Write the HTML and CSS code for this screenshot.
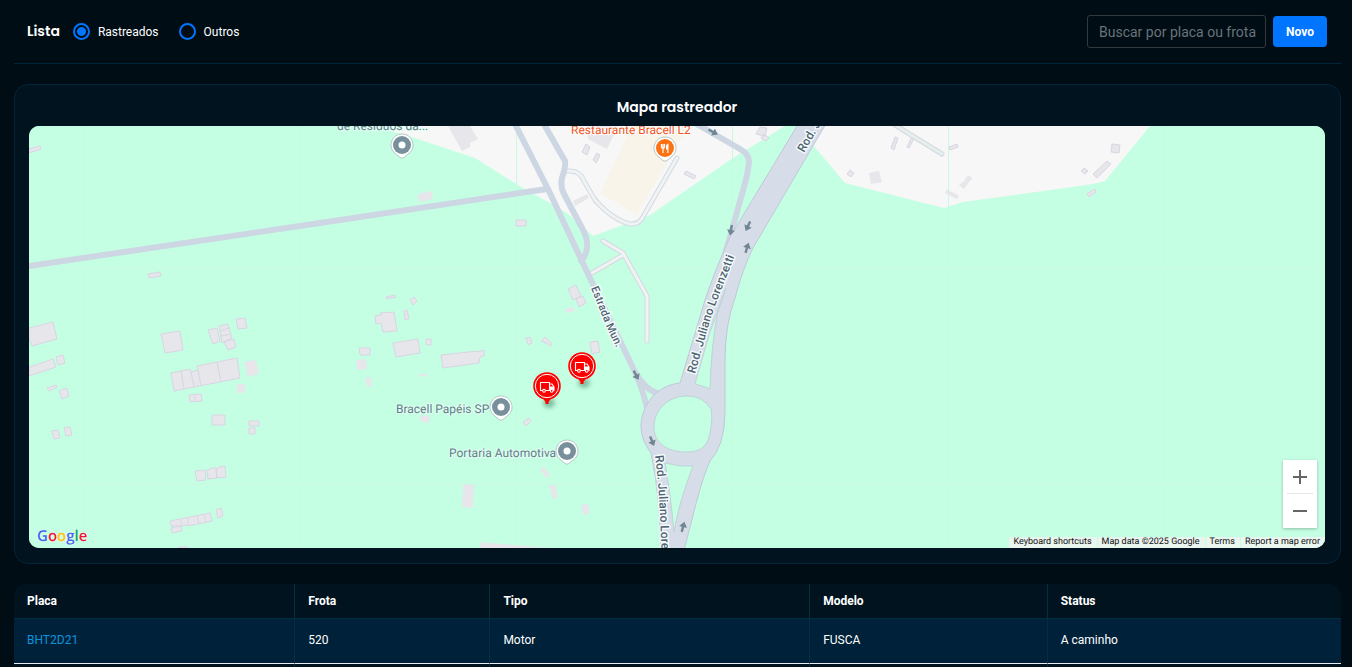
FILE: index.html
```html
<!DOCTYPE html>
<html lang="pt-BR">
<head>
<meta charset="utf-8">
<title>Lista de veículos</title>
<link rel="stylesheet" href="styles.css">
</head>
<body>
<header class="toolbar">
  <h1 class="toolbar-title">Lista</h1>
  <label class="choice"><input type="radio" name="lista" checked><span>Rastreados</span></label>
  <label class="choice"><input type="radio" name="lista"><span>Outros</span></label>
  <input class="search" type="text" aria-label="Buscar" placeholder="Buscar por placa ou frota">
  <button class="new-button" type="button">Novo</button>
</header>
<main>
<section class="card">
  <h2 class="card-title">Mapa rastreador</h2>
  <div class="map">
    <svg class="map-canvas" viewBox="29 126 1296 422" preserveAspectRatio="xMidYMid slice" role="img" aria-label="Mapa">
      <defs>
        <g id="pin">
          <path class="pin-edge" d="M0-11A11 11 0 0 1 8 7.500L2 12.500Q0 14-2 12.500L-8 7.500A11 11 0 0 1 0-11Z"/>
          <circle r="9"/>
        </g>
        <path id="arrow" class="arrow" d="M-1.200-5H1.200V0H4L0 5.500-4 0H-1.200Z"/>
        <g id="truck">
          <ellipse class="truck-shadow" cx="2" cy="17" rx="6" ry="5"/>
          <path fill="#f00" d="M-5 11H5L1.500 16V18H-1.500V16Z"/>
          <circle r="13.800" fill="#f00"/>
          <circle r="11.700" fill="none" stroke="#fff" stroke-width="1"/>
          <path class="truck-line" d="M-4.500 4.500H-6.500V-3.500H2.500V4.500H-1M2.500-2H5L7 1V4.500H6.500"/>
          <path fill="#fff" d="M2.500 .500H7V4.500H2.500Z"/>
          <circle class="truck-line" cx="-3" cy="4.800" r="1.400"/>
          <circle class="truck-line" cx="4.700" cy="4.800" r="1.400"/>
        </g>
        <path id="way-north" d="M695 374L704 342Q710 319 718 298L739 245"/>
        <path id="way-top" d="M804 153L835 99"/>
        <path id="way-mun" d="M591 288L607 328L625 366"/>
        <path id="way-south" d="M655 456Q660 490 662 570"/>
      </defs>
      <rect x="29" y="-400" width="1296" height="1500" fill="#c5ffe3"/>
      <path fill="#f7f7f7" d="M372 126V-200H797V126L813 145 845 183 944 208 963 202 1093 184 1105 181 1150 126V-200H785V126L727 162 650 215 593 236 567 213 550 203 523 188 475 158 412 137Z"/>
      <path fill="#c5ffe3" d="M785 126H798L813 145 780 200H733L727 162Z"/>
      <path fill="#f8f4e9" d="M632 126H690L678 144 637 215 600 193Z"/>
      <path class="tile" d="M84.500 126V548M300.500 126V548M516.500 126V548M732.500 126V548M948.500 126V548M1164.500 126V548M29 268.500H1325M29 484.500H1325"/>

      <g class="building soft">
        <path d="M448 126H470L478 139 470 143 470 147 462 151Z"/>
        <path d="M588 126H618L607 149 588 139Z"/>
        <path d="M573 201L587 194 589 198 575 206ZM592 198L596 196 599 201 594 204Z"/>
        <path d="M418 194L432 191 433 199 419 202Z"/>
        <path d="M869 173L879 171 882 182 871 184ZM947 189L959 196 957 199 945 193ZM968 175L972 178 964 189 959 185 964 181Z"/>
        <path d="M244 362L256 360 259 374 248 377ZM237 384H245V393H237Z"/>
        <path d="M356 360L366 359 367 369 357 370ZM365 378L371 377 372 386 367 387ZM419 375L426 373 426 376 420 377Z"/>
        <path d="M420 415L430 416 429 423 420 421ZM463 484L474 485 473 508 462 507ZM540 469L544 467 550 475 546 478ZM549 486L555 484 558 497 553 499ZM581 505L588 504 590 513 583 515ZM481 542L536 547 570 549H480Z"/>
        <path d="M565 309L574 307 575 311 566 313Z"/>
      </g>
      <g class="building">
        <path d="M586 144L590 147 587 155 582 152ZM597 153L600 155 596 163 593 160Z"/>
        <path d="M686 171L696 176 694 179 684 174ZM760 127L767 128 765 136 756 134ZM764 134L769 138 766 141 761 138Z"/>
        <path d="M516 220H526V226H516Z"/>
        <path d="M895 137L898 138 894 150 891 148ZM912 136L914 138 909 148 907 147ZM949 147L957 144 958 147 950 150Z"/>
        <path d="M850 170L854 173 851 177 847 174Z"/>
        <path d="M1112 144L1120 145 1119 153 1111 152ZM1107 161L1111 164 1097 178 1093 174ZM1084 168L1088 171 1085 174 1081 171ZM1087 194L1095 189 1096 192 1089 197Z"/>
        <path d="M148 274L160 272 161 276 149 278Z"/>
        <path d="M29 328L53 322 57 339 32 346 29 338ZM29 367L53 359 56 367 29 376ZM56 357L63 355 65 363 58 365ZM47 388L56 385 57 387 49 391ZM59 391L67 388 69 396 62 399Z"/>
        <path d="M29 149L40 146 41 149 29 153Z"/>
        <path d="M161 334L180 331 183 350 165 353ZM208 330L217 328 220 341 213 344ZM219 326L228 324 232 338 222 343ZM220 331L229 328M221 336L231 334M224 342L234 339 236 347 228 350ZM236 319L245 318 247 328 238 329Z"/>
        <path d="M171 373L190 369 191 372 198 370 197 366 237 358 240 378 174 391ZM181 371L184 389M191 372L194 387M198 370L201 386M217 362L221 382"/>
        <path d="M189 395L201 394 202 401 190 402ZM195 395V402"/>
        <path d="M52 431L58 430 60 438 54 439ZM64 428L70 427 72 435 66 436ZM212 415H225V425H212ZM249 421H259V426H249ZM249 428H255V434H249Z"/>
        <path d="M195 471L205 470 206 480 197 481ZM207 470L211 469 211 468 216 468 217 478 208 479ZM216 469L220 467 225 466 226 477 217 478Z"/>
        <path d="M170 521L180 519 190 517 210 513 212 521 193 525 181 526 171 526ZM180 519L182 525M188 518V525M197 516L199 524M204 514L206 523M216 510L221 508 223 516 218 518ZM171 528L181 526 182 531 172 533ZM178 547H188V551H178Z"/>
        <path d="M386 297L395 295 396 297 387 299ZM410 300L414 297 417 301 413 305ZM404 311L407 310 409 319 405 320ZM375 316L381 315 380 313 394 312 397 331 383 332 381 323 376 324Z"/>
        <path d="M393 343L418 339 420 353 396 357ZM426 339H431V345H426ZM441 355L478 351 478 352 484 350 484 356 480 357 479 363 443 368ZM359 348H370V355H360Z"/>
        <path d="M568 289L576 285 581 296 573 300ZM576 299L583 296 586 303 579 307ZM526 338L530 337 532 343 528 345ZM541 341L545 337 552 344 550 346 546 343ZM590 342L598 341 600 352 592 354Z"/>
        <path d="M523 422L529 418 531 421 526 426Z"/>
      </g>

      <g class="lane-edge"><path d="M568 171Q580 170 584 181L595 200Q613 220 630 224 640 225 644 215L677 158M895 125L942 154M603 241L623 253 647 296V341M623 255L592 273"/></g>
      <g class="lane"><path d="M568 171Q580 170 584 181L595 200Q613 220 630 224 640 225 644 215L677 158M603 241L623 253 647 296V341M623 255L592 273"/><path stroke="#e7eeee" d="M895 125L942 154"/></g>
      <g class="street">
        <path d="M29 266L320 223 547 189"/>
        <path d="M501 98L516 126 548 189 589 276 622 345 635 372Q645 390 659 394M635 372Q642 387 647 408"/>
        <path d="M533 105L545 126 565 161Q566 166 562 178 560 187 564 194L582 228Q588 238 587 248 586 256 581 261"/>
        <path d="M665 106L700 126 740 149Q749 154 749 162 748 174 744 187L730 237 721 268"/>
      </g>
      <path class="highway" d="M847 88L753 248Q743 268 735 298 725 325 725 360V412Q725 445 710 461 703 477 697 500L681 562H661Q661 500 651 453 641 440 641 427C641 405 657 385 680 383L705 300Q715 270 730 237L797 126 820 88Z"/>
      <path class="island" d="M726 288L709 335 695 384Q704 386 710 389 711 350 717 315ZM687 396C668 396 654 410 654 427S668 452 687 452C702 452 708 445 710 433Q713 418 711 409 703 396 687 396ZM665 463Q680 467 693 466 679 502 674 532 670 490 665 463Z"/>

      <use href="#arrow" transform="translate(713 132) rotate(-62)"/>
      <use href="#arrow" transform="translate(731 230) rotate(10)"/>
      <use href="#arrow" transform="translate(748 226) rotate(25)"/>
      <use href="#arrow" transform="translate(747 248) rotate(197)"/>
      <use href="#arrow" transform="translate(636 375) rotate(-28)"/>
      <use href="#arrow" transform="translate(652 441) rotate(-22)"/>
      <use href="#arrow" transform="translate(683 527) rotate(195)"/>

      <g class="road-name">
        <text><textPath href="#way-north">Rod. Juliano Lorenzetti</textPath></text>
        <text><textPath href="#way-top">Rod. J</textPath></text>
        <text class="minor"><textPath href="#way-mun">Estrada Mun.</textPath></text>
        <text><textPath href="#way-south">Rod. Juliano Lore</textPath></text>
      </g>
      <g class="place">
        <text x="337" y="130">de Resíduos da...</text>
        <text x="396" y="413">Bracell Papéis SP</text>
        <text x="449" y="457">Portaria Automotiva</text>
        <text class="food" x="571" y="134">Restaurante Bracell L2</text>
      </g>
      <g fill="#78909c">
        <use href="#pin" x="402" y="145"/><circle class="dot" cx="402" cy="145" r="3.500"/>
        <use href="#pin" x="501" y="407"/><circle class="dot" cx="501" cy="407" r="3.500"/>
        <use href="#pin" x="567" y="451"/><circle class="dot" cx="567" cy="451" r="3.500"/>
      </g>
      <use href="#pin" x="665" y="148" fill="#ff7214"/>
      <path fill="none" stroke="#fff" stroke-width="1.200" d="M661.500 144V147Q661.500 148.500 663 148.500T664.500 147V144M663 144V153"/>
      <path fill="#fff" d="M668.500 143.500V153H667.300V149.500H666V146Q666 144 668.500 143.500Z"/>
      <use href="#truck" x="582" y="366"/>
      <use href="#truck" x="547" y="386"/>
    </svg>
    <a class="brand" href="#" aria-label="Google"><span class="blue">G</span><span class="red">o</span><span class="yellow">o</span><span class="blue">g</span><span class="green">l</span><span class="red">e</span></a>
    <div class="zoom">
      <button type="button" aria-label="Aumentar zoom"><svg viewBox="0 0 14 14"><path d="M7 0V14M0 7H14"/></svg></button>
      <button type="button" aria-label="Diminuir zoom"><svg viewBox="0 0 14 14"><path d="M0 7H14"/></svg></button>
    </div>
    <div class="legal">
      <button type="button">Keyboard shortcuts</button>
      <span>Map data ©2025 Google</span>
      <a href="#">Terms</a>
      <a href="#">Report a map error</a>
    </div>
  </div>
</section>
<table class="vehicles">
  <colgroup><col class="col-plate"><col class="col-fleet"><col class="col-type"><col class="col-model"><col></colgroup>
  <thead><tr><th>Placa</th><th>Frota</th><th>Tipo</th><th>Modelo</th><th>Status</th></tr></thead>
  <tbody>
    <tr class="current"><td><a href="#">BHT2D21</a></td><td>520</td><td>Motor</td><td>FUSCA</td><td>A caminho</td></tr>
    <tr class="next"><td></td><td></td><td></td><td></td><td></td></tr>
  </tbody>
</table>
</main>
</body>
</html>
```

FILE: styles.css
```css
* { box-sizing: border-box; }

body {
  margin: 0;
  padding: 0 11px 0 14px;
  background: #000d15;
  color: #fff;
  font: 12px/16px Roboto, sans-serif;
}

button, input { font: inherit; }

.toolbar {
  display: flex;
  align-items: center;
  height: 64px;
  padding: 0 14px 0 13px;
  border-bottom: 1px solid #00263b;
}

.toolbar-title, .card-title {
  margin: 0;
  font: 600 14px/20px Poppins, Inter, sans-serif;
}

.toolbar-title { margin-right: 13px; padding-bottom: 2px; }

.choice {
  display: flex;
  align-items: center;
  gap: 8px;
  margin-right: 20px;
}

.choice input {
  appearance: none;
  width: 17px;
  height: 17px;
  margin: 0;
  border: 2px solid #0075ff;
  border-radius: 50%;
}

.choice input:checked {
  background: radial-gradient(circle, #0075ff 4px, transparent 5px);
}

.search {
  width: 179px;
  height: 33px;
  margin-left: auto;
  padding: 0 4px 0 11px;
  border: 1px solid #33383c;
  border-radius: 3px;
  background: transparent;
  color: #fff;
  font-size: 14px;
}

.search::placeholder { color: #69737a; opacity: 1; }

.new-button {
  width: 54px;
  height: 31px;
  margin-left: 7px;
  padding: 0;
  border: 0;
  border-radius: 4px;
  background: #0075ff;
  color: #fff;
  font-weight: 700;
}

.card {
  margin: 20px 0;
  padding: 12px 15px 15px 14px;
  border: 1px solid #00263b;
  border-radius: 14px;
  background: #00131f;
}

.card-title {
  margin-bottom: 9px;
  text-align: center;
}

.map {
  position: relative;
  height: 422px;
  overflow: hidden;
  border-radius: 10px;
  background: #c5ffe3;
}

.map-canvas { display: block; width: 100%; height: 100%; }

.tile { stroke: #c9f9e2; }
.building { fill: #e6e6eb; stroke: #d9d5e3; stroke-width: 1; }
.soft { stroke: none; }
.lane, .lane-edge, .street { fill: none; stroke-linecap: round; stroke-linejoin: round; }
.lane-edge { stroke: #d3dae0; stroke-width: 5; }
.lane { stroke: #f0f3f3; stroke-width: 3; }
.street { stroke: #cdd7e3; stroke-width: 6; }
.highway { fill: #d6dde8; stroke: #bfc9d8; }
.island { fill: #c5ffe3; stroke: #bfd2d8; }
.arrow { fill: #6f8793; }

.road-name, .place {
  font: 500 12px Roboto, sans-serif;
  fill: #4e6272;
  stroke: #f4faf9;
  stroke-width: 3px;
  stroke-linejoin: round;
  paint-order: stroke;
  text-rendering: geometricPrecision;
}

.minor { font-size: 11px; }
.place { font-weight: 400; fill: #607d8b; stroke: #e2fff1; stroke-width: 2px; }
.food { fill: #f0541e; stroke: #fff; }

.pin-edge { fill: #fff; stroke: #b5c9c5; stroke-width: 1; }
.dot { fill: #fff; }
.truck-shadow { fill: #3b7d60; opacity: .5; filter: blur(2px); }
.truck-line { fill: #f00; stroke: #fff; stroke-width: 1.1px; }

.brand {
  position: absolute;
  left: 8px;
  bottom: 2px;
  font: 600 15px/20px "Open Sans", sans-serif;
  text-decoration: none;
  text-rendering: geometricPrecision;
  text-shadow: 0 0 2px #fff;
}

.blue { color: #4467ee; }
.red { color: #f51537; }
.yellow { color: #ffc107; }
.green { color: #15a15b; }

.zoom {
  position: absolute;
  right: 8px;
  bottom: 20px;
  width: 34px;
  background: #fff;
  box-shadow: 0 1px 3px #0004;
}

.zoom button {
  display: flex;
  align-items: center;
  justify-content: center;
  width: 100%;
  height: 34px;
  padding: 0;
  border: 0;
  background: linear-gradient(#e6e6e6, #e6e6e6) bottom / 26px 1px no-repeat;
}

.zoom button:last-child { background: none; }
.zoom svg { width: 14px; height: 14px; stroke: #666; stroke-width: 2; }

.legal {
  position: absolute;
  right: 0;
  bottom: 0;
  display: flex;
  gap: 1px;
  color: #111;
  font-size: 9px;
  line-height: 11px;
  text-rendering: geometricPrecision;
}

.legal > * {
  padding: 0 5px 0 4px;
  border: 0;
  background: #eaf5ef;
  color: inherit;
  text-decoration: none;
  text-rendering: inherit;
}

.vehicles {
  width: 100%;
  overflow: hidden;
  border-spacing: 0;
  border-radius: 12px 12px 0 0;
  table-layout: fixed;
}

.col-plate { width: 21.2%; }
.col-fleet { width: 14.7%; }
.col-type { width: 24.1%; }
.col-model { width: 17.9%; }

.vehicles th, .vehicles td {
  padding: 0 13px;
  border-right: 1px solid #012f40;
  border-bottom: 1px solid #012f40;
  text-align: left;
}

.vehicles th:last-child, .vehicles td:last-child { border-right: 0; }
.vehicles th { height: 35px; background: #00131f; }
.vehicles .current td { height: 45px; padding-bottom: 2px; background: #00213a; border-bottom-color: #e6edf2; }
.vehicles .next td { height: 3px; border-bottom: 0; background: #00131f; }
.vehicles a { color: #0c95dc; text-decoration: none; }
```
